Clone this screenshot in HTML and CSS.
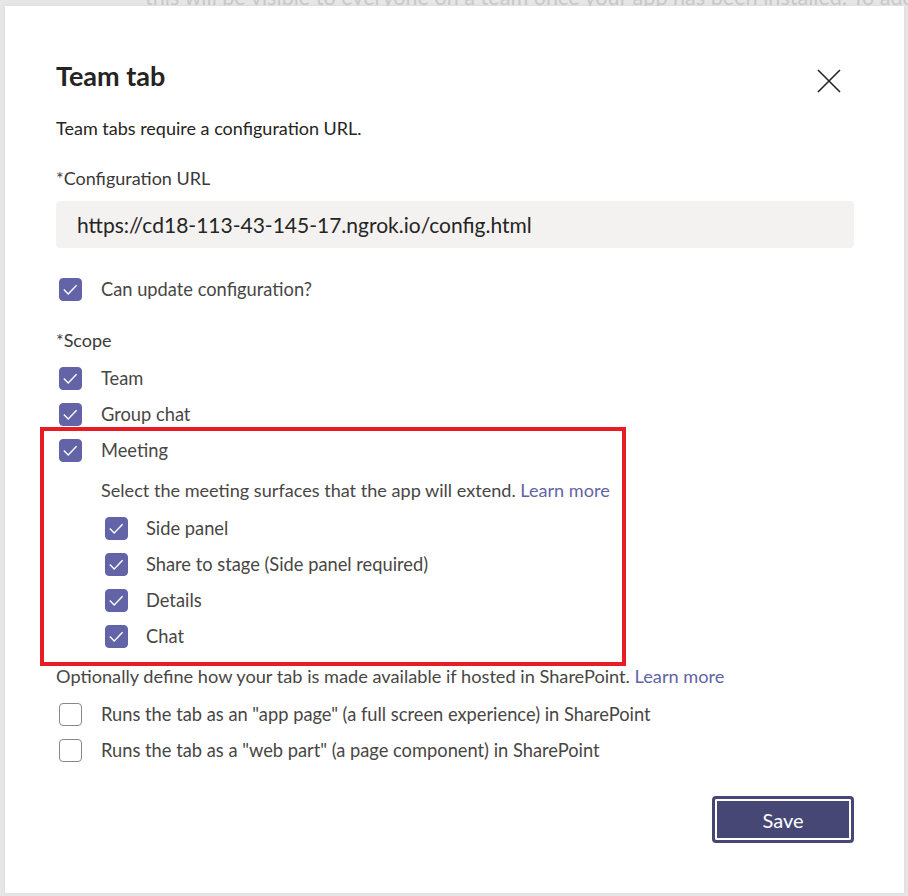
FILE: index.html
```html
<!DOCTYPE html>
<html lang="en">
<head>
<meta charset="utf-8">
<title>Team tab</title>
<link rel="stylesheet" href="styles.css">
</head>
<body>
<div class="backdrop-text">this will be visible to everyone on a team once your app has been installed. To add</div>
<div class="dialog">
  <div class="header">
    <h1 class="title">Team tab</h1>
    <button class="close" aria-label="Close">
      <svg width="24" height="24" viewBox="0 0 24 24"><path d="M1 1L23 23M23 1L1 23" stroke="#252423" stroke-width="1.6" fill="none"/></svg>
    </button>
  </div>
  <p class="subtitle">Team tabs require a configuration URL.</p>
  <div class="field-label">*Configuration URL</div>
  <div class="input">https://cd18-113-43-145-17.ngrok.io/config.html</div>

  <div class="row row-first"><span class="cb checked"></span><span class="lbl">Can update configuration?</span></div>

  <div class="field-label scope">*Scope</div>
  <div class="group scope-group">
    <div class="row"><span class="cb checked"></span><span class="lbl">Team</span></div>
    <div class="row"><span class="cb checked"></span><span class="lbl">Group chat</span></div>
    <div class="row"><span class="cb checked"></span><span class="lbl">Meeting</span></div>
    <div class="hint">Select the meeting surfaces that the app will extend. <a href="#">Learn more</a></div>
    <div class="sub-group">
      <div class="row sub"><span class="cb checked"></span><span class="lbl">Side panel</span></div>
      <div class="row sub"><span class="cb checked"></span><span class="lbl">Share to stage (Side panel required)</span></div>
      <div class="row sub"><span class="cb checked"></span><span class="lbl">Details</span></div>
      <div class="row sub"><span class="cb checked"></span><span class="lbl">Chat</span></div>
    </div>
  </div>
  <div class="highlight"></div>

  <div class="note">Optionally define how your tab is made available if hosted in SharePoint. <a href="#">Learn more</a></div>
  <div class="group sp-group">
    <div class="row"><span class="cb"></span><span class="lbl">Runs the tab as an "app page" (a full screen experience) in SharePoint</span></div>
    <div class="row"><span class="cb"></span><span class="lbl">Runs the tab as a "web part" (a page component) in SharePoint</span></div>
  </div>

  <div class="footer"><button class="save">Save</button></div>
</div>
</body>
</html>
```
FILE: styles.css
```css
* { box-sizing: border-box; }
html, body { margin: 0; padding: 0; }
body {
  background: #e6e6e6;
  font-family: "Lato", "Noto Sans", sans-serif;
  color: #252423;
  width: 908px;
  height: 896px;
  overflow: hidden;
  position: relative;
}
.backdrop-text {
  position: absolute;
  top: -16px;
  left: 145px;
  white-space: nowrap;
  font-size: 21.6px;
  color: #c9c9c9;
}
.dialog {
  position: relative;
  z-index: 1;
  margin: 6px 0 0 5px;
  width: 899px;
  height: 887px;
  background: #fff;
  box-shadow: 0 0 4px rgba(0,0,0,0.06);
  padding: 52px 50px 0 51px;
  display: flex;
  flex-direction: column;
}
.header {
  display: flex;
  justify-content: space-between;
  align-items: flex-start;
  height: 36px;
}
.title {
  margin: 0;
  font-size: 27px;
  font-weight: 700;
  line-height: 36px;
  color: #252423;
}
.close {
  border: 0;
  background: none;
  padding: 0;
  margin: 11px 13px 0 0;
  width: 24px;
  height: 24px;
  display: flex;
}
.subtitle {
  margin: 20px 0 0;
  font-size: 18px;
  line-height: 28px;
  color: #252423;
}
.field-label {
  margin-top: 24px;
  font-size: 18px;
  line-height: 24px;
  color: #3b3a39;
}
.input {
  margin-top: 11px;
  height: 47px;
  background: #f3f2f1;
  border-radius: 4px;
  padding: 0 21px;
  display: flex;
  align-items: center;
  font-size: 21px;
  color: #252423;
}
.row {
  display: flex;
  align-items: center;
  height: 36px;
  padding-left: 3px;
}
.row-first { margin-top: 23px; }
.field-label.scope { margin-top: 21px; }
.group { display: flex; flex-direction: column; }
.scope-group { margin-top: 8px; }
.cb {
  width: 23px;
  height: 23px;
  flex: none;
  border-radius: 4px;
  border: 1px solid #8a8886;
  background: #fff;
  margin-right: 19px;
  position: relative;
}
.cb.checked {
  border-color: #6264a7;
  background: #6264a7 url("data:image/svg+xml,%3Csvg xmlns='http://www.w3.org/2000/svg' width='23' height='23' viewBox='0 0 23 23'%3E%3Cpath d='M4.8 11.6L9.2 16L17.6 7.2' stroke='white' stroke-width='1.4' fill='none'/%3E%3C/svg%3E") center/23px 23px no-repeat;
}
.lbl {
  font-size: 18.3px;
  color: #484644;
  white-space: nowrap;
}
.hint {
  margin-top: 10px;
  padding-left: 45px;
  font-size: 18.1px;
  line-height: 24px;
  color: #484644;
}
a { color: #6264a7; text-decoration: none; }
.sub-group { margin-top: 8px; display: flex; flex-direction: column; }
.row.sub { padding-left: 49px; }
.row.sub .cb { margin-right: 18px; }
.highlight {
  position: absolute;
  left: 35px;
  top: 421px;
  width: 586px;
  height: 239px;
  border: 4px solid #e81c24;
  pointer-events: none;
}
.note {
  margin-top: 10px;
  font-size: 18.2px;
  line-height: 24px;
  color: #484644;
}
.sp-group { margin-top: 8px; }
.footer {
  margin-top: 28px;
  display: flex;
  justify-content: flex-end;
}
.save {
  width: 142px;
  height: 47px;
  border: 3px solid #464775;
  border-radius: 4px;
  box-shadow: inset 0 0 0 2px #fff;
  background: #464775;
  color: #fff;
  font-family: "Lato", "Noto Sans", sans-serif;
  font-size: 20px;
  font-weight: 400;
  padding: 0;
}
```
